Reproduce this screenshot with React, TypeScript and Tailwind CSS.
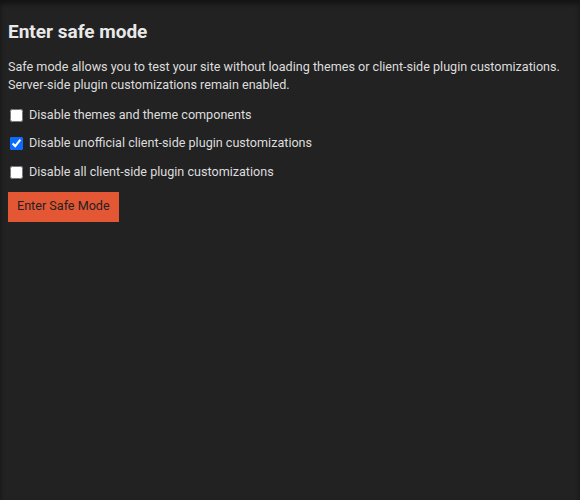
import React, { useState } from 'react';

const options = [
  { id: 'themes', label: 'Disable themes and theme components', checked: false },
  { id: 'unofficial', label: 'Disable unofficial client-side plugin customizations', checked: true },
  { id: 'all', label: 'Disable all client-side plugin customizations', checked: false },
];

const App: React.FC = () => {
  const [state, setState] = useState<Record<string, boolean>>(
    Object.fromEntries(options.map((o) => [o.id, o.checked]))
  );

  return (
    <div className="min-h-[500px] bg-[#222222] text-[#dddddd] font-['Roboto',sans-serif] shadow-[inset_0_4px_5px_rgba(0,0,0,0.45)]">
      <div className="px-2 pt-[20px]">
        <h2 className="text-[19px] leading-6 font-bold text-[#e9e9e9]">Enter safe mode</h2>

        <p className="mt-[14px] text-[12.6px] leading-[18px] whitespace-nowrap">
          Safe mode allows you to test your site without loading themes or client-side plugin customizations.
          <br />
          Server-side plugin customizations remain enabled.
        </p>

        <div className="mt-[7px] flex flex-col">
          {options.map((o) => (
            <label key={o.id} className="flex items-center h-[28.5px] text-[12.6px] text-[#dddddd]">
              <input
                type="checkbox"
                checked={state[o.id]}
                onChange={(e) => setState({ ...state, [o.id]: e.target.checked })}
                className="ml-[2px] mr-[6px] w-[13px] h-[13px] accent-[#0b6bff]"
              />
              {o.label}
            </label>
          ))}
        </div>

        <button className="mt-[5px] h-[30px] px-[9px] bg-[#e45735] text-[#222222] text-[12.6px]">
          Enter Safe Mode
        </button>
      </div>
    </div>
  );
};

export default App;
